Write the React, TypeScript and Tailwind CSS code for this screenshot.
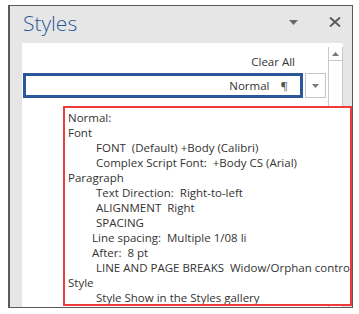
import React from "react";

const font = { fontFamily: '"Open Sans", "Noto Sans", sans-serif' };

function Tri({ className = "" }: { className?: string }) {
  return (
    <svg width="9" height="5" viewBox="0 0 9 5" className={className}>
      <path d="M0 0 L9 0 L4.5 5 Z" fill="currentColor" />
    </svg>
  );
}

export default function App() {
  const lines: { t: string; i: number }[] = [
    { t: "Normal:", i: 0 },
    { t: "Font", i: 0 },
    { t: "FONT  (Default) +Body (Calibri)", i: 28 },
    { t: "Complex Script Font:  +Body CS (Arial)", i: 28 },
    { t: "Paragraph", i: 0 },
    { t: "Text Direction:  Right-to-left", i: 28 },
    { t: "ALIGNMENT  Right", i: 28 },
    { t: "SPACING", i: 28 },
    { t: "Line spacing:  Multiple 1/08 li", i: 24 },
    { t: "After:  8 pt", i: 24 },
    { t: "LINE AND PAGE BREAKS  Widow/Orphan control", i: 28 },
    { t: "Style", i: 0 },
    { t: "Style Show in the Styles gallery", i: 28 },
  ];
  return (
    <div className="relative w-[359px] h-[314px] bg-white overflow-hidden" style={font}>
      <div className="ml-[8px] mt-[5px] w-[345px] h-[303px] border border-l-2 border-[#5a5a5a] bg-[#e6e6e6] flex flex-col">
        <div className="h-[37px] flex items-center pl-[13px] pr-[11px]">
          <span className="text-[21px] font-light text-[#2b579a] leading-none -mt-[2px]">Styles</span>
          <div className="ml-auto flex items-center gap-[31px] text-[#6a6a6a]">
            <Tri className="mt-[-4px]" />
            <svg width="12" height="10" viewBox="0 0 12 10" className="mt-[-5px]">
              <path d="M1 0.5 L11 9.5 M11 0.5 L1 9.5" stroke="#555" strokeWidth="1.8" />
            </svg>
          </div>
        </div>
        <div className="flex-1 flex pl-[12px] pr-[9px]">
          <div className="flex-1 bg-white flex">
            <div className="flex-1 flex flex-col">
              <div className="h-[30px] flex items-end justify-end pr-[33px] pb-[3px]">
                <span className="text-[11.5px] text-[#333]">Clear All</span>
              </div>
              <div className="flex items-center gap-[2px] ml-[1px]">
                <div className="w-[280px] h-[25px] border-[3px] border-[#2b579a] flex items-center justify-end pr-[12px] text-[11.5px] text-[#333]">
                  <span>Normal</span>
                  <span className="ml-[11px] text-[#555]">¶</span>
                </div>
                <div className="w-[21px] h-[25px] border border-[#c6c6c6] flex items-center justify-center text-[#777]">
                  <svg width="7" height="4" viewBox="0 0 7 4"><path d="M0 0 L7 0 L3.5 4 Z" fill="currentColor" /></svg>
                </div>
              </div>
            </div>
            <div className="w-[15px] mt-[4px] flex flex-col border-x border-[#c8c8c8]">
              <div className="h-[14px] border-b border-[#c8c8c8] flex items-center justify-center text-[#777]">
                <svg width="7" height="4" viewBox="0 0 7 4"><path d="M0 4 L7 4 L3.5 0 Z" fill="currentColor" /></svg>
              </div>
            </div>
          </div>
        </div>
      </div>
      <div className="absolute left-[63px] top-[106px] w-[289px] h-[200px] border-2 border-[#ee3b3b] bg-white overflow-hidden pl-[3px] pt-[2px]">
        {lines.map((l, k) => (
          <div
            key={k}
            className="text-[11.5px] leading-[15px] text-[#333] whitespace-pre"
            style={{ paddingLeft: l.i }}
          >
            {l.t}
          </div>
        ))}
      </div>
    </div>
  );
}
